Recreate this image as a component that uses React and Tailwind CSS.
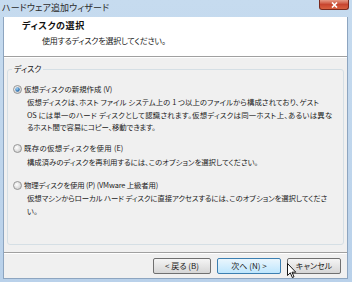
import React from "react";

const F = { fontFamily: '"Noto Sans CJK JP", "Noto Sans", sans-serif', fontFeatureSettings: '"palt"' };

function Radio({ checked }) {
  return (
    <svg width="9" height="9" viewBox="0 0 9 9" className="shrink-0">
      <defs>
        <radialGradient id={checked ? "rc" : "ru"} cx="0.4" cy="0.4" r="0.6">
          <stop offset="0" stopColor="#ffffff" />
          <stop offset="1" stopColor="#d0d0d0" />
        </radialGradient>
        <radialGradient id="dot" cx="0.4" cy="0.35" r="0.6">
          <stop offset="0" stopColor="#a8d8f8" />
          <stop offset="1" stopColor="#1f64a8" />
        </radialGradient>
      </defs>
      <circle cx="4.5" cy="4.5" r="4" fill={checked ? "url(#rc)" : "url(#ru)"} stroke="#8e8f8f" strokeWidth="0.9" />
      {checked && <circle cx="4.5" cy="4.5" r="2.2" fill="url(#dot)" />}
    </svg>
  );
}

function Btn({ children, hot }) {
  return (
    <div
      className={
        "h-[16px] flex items-center justify-center rounded-[2px] border text-[8px] text-[#1a1a1a] " +
        (hot
          ? "border-[#3c7fb1] bg-gradient-to-b from-[#eaf6fd] to-[#bee6fd]"
          : "border-[#707070] bg-gradient-to-b from-[#f5f5f5] to-[#d6d6d6]")
      }
    >
      {children}
    </div>
  );
}

export default function App() {
  return (
    <div className="w-[352px] h-[282px] relative overflow-hidden bg-gradient-to-b from-[#c6dbef] to-[#b9d1ea] flex flex-col" style={F}>
      {/* title bar */}
      <div className="h-[17px] flex items-center pl-[2px] pb-[2px] shrink-0">
        <div className="w-[107px] text-[9px] text-[#2b2b2b] whitespace-nowrap tracking-[-0.2px] [text-align-last:justify]">ハードウェア追加ウィザード</div>
      </div>
      <div className="absolute top-0 right-[3px] w-[30px] h-[10px] rounded-b-[3px] border border-t-0 border-[#7a2a1e] bg-gradient-to-b from-[#e59a86] via-[#c8452f] to-[#d8603f] flex items-center justify-center">
        <svg width="7" height="6" viewBox="0 0 7 6">
          <path d="M1 0.5 L6 5.5 M6 0.5 L1 5.5" stroke="#fff" strokeWidth="1.6" />
        </svg>
      </div>

      <div className="ml-[3px] mr-[4px] mb-[3px] flex-1 flex flex-col bg-[#f0f0f0] border border-[#8da5c0] border-t-0">
        {/* header */}
        <div className="h-[40px] bg-white border-b border-[#a0a0a0] shrink-0 pt-[2px] whitespace-nowrap">
          <div className="ml-[18px] w-[62px] text-[9px] font-bold text-[#111] leading-[13px] tracking-[-0.2px] [text-align-last:justify]">ディスクの選択</div>
          <div className="ml-[38px] w-[116px] text-[8px] text-[#1a1a1a] leading-[13px] mt-[2px] tracking-[-0.2px] [text-align-last:justify]">使用するディスクを選択してください。</div>
        </div>
        <div className="h-px bg-white shrink-0" />
        {/* body */}
        <div className="flex-1 px-[3px] pt-[11px] pb-[7px] flex flex-col">
          <div className="relative flex-1 border border-[#d5dfe5] rounded-[3px] pt-[12px] pl-[5px]">
            <div className="absolute -top-[7px] left-[4px] px-[2px] bg-[#f0f0f0] text-[8px] text-[#1a1a1a] leading-[12px]">ディスク</div>
            <div className="flex flex-col text-[7.4px] text-[#1a1a1a] leading-[12.5px] whitespace-nowrap tracking-[-0.15px]">
              <div>
                <div className="flex items-center gap-[2px] h-[14px]">
                  <Radio checked />
                  <div className="w-[88px] [text-align-last:justify]">仮想ディスクの新規作成 (V)</div>
                </div>
                <div className="pl-[14px]">
                  <div className="w-[292px] [text-align-last:justify]">仮想ディスクは、ホスト ファイル システム上の 1 つ以上のファイルから構成されており、ゲスト</div>
                  <div className="w-[305px] [text-align-last:justify]">OS には単一のハード ディスクとして認識されます。仮想ディスクは同一ホスト上、あるいは異な</div>
                  <div>るホスト間で容易にコピー、移動できます。</div>
                </div>
              </div>
              <div className="mt-[8px]">
                <div className="flex items-center gap-[2px] h-[14px]">
                  <Radio />
                  <div className="w-[99px] [text-align-last:justify]">既存の仮想ディスクを使用 (E)</div>
                </div>
                <div className="pl-[14px]">
                  <div className="w-[231px] [text-align-last:justify]">構成済みのディスクを再利用するには、このオプションを選択してください。</div>
                </div>
              </div>
              <div className="mt-[10px]">
                <div className="flex items-center gap-[2px] h-[14px]">
                  <Radio />
                  <div>物理ディスクを使用 (P) (VMware 上級者用)</div>
                </div>
                <div className="pl-[14px]">
                  <div className="w-[300px] [text-align-last:justify]">仮想マシンからローカル ハード ディスクに直接アクセスするには、このオプションを選択してくださ</div>
                  <div>い。</div>
                </div>
              </div>
            </div>
          </div>
        </div>
        <div className="h-px bg-[#a0a0a0] shrink-0" />
        <div className="h-px bg-white shrink-0" />
        <div className="h-[24px] flex items-center justify-end gap-[6px] pr-[6px] shrink-0">
          <div className="w-[58px]"><Btn>&lt; 戻る (B)</Btn></div>
          <div className="w-[64px]"><Btn hot>次へ (N) &gt;</Btn></div>
          <div className="w-[54px]"><Btn>キャンセル</Btn></div>
        </div>
      </div>
      {/* cursor */}
      <svg className="absolute left-[287px] top-[263px]" width="10" height="16" viewBox="0 0 10 16">
        <path d="M0.5 0.5 L0.5 12.5 L3.3 9.8 L5.3 14.5 L7 13.8 L5 9.2 L8.8 9.2 Z" fill="#fff" stroke="#000" strokeWidth="0.9" strokeLinejoin="round" />
      </svg>
    </div>
  );
}
